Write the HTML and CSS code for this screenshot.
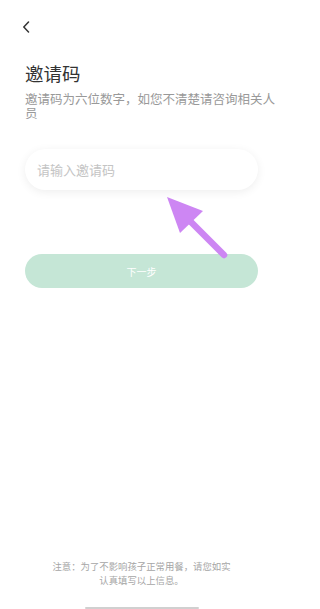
FILE: index.html
```html
<!DOCTYPE html>
<html lang="zh">
<head>
<meta charset="utf-8">
<link rel="stylesheet" href="styles.css">
</head>
<body>
<div class="page">
  <div class="nav">
    <svg class="back" width="8" height="12" viewBox="0 0 8 12"><path d="M6.5 1 L1.8 6 L6.5 11" fill="none" stroke="#333" stroke-width="1.5" stroke-linecap="round" stroke-linejoin="round"/></svg>
  </div>
  <h1 class="title">邀请码</h1>
  <p class="subtitle">邀请码为六位数字，如您不清楚请咨询相关人员</p>
  <div class="input-box"><span class="placeholder">请输入邀请码</span></div>
  <div class="btn">下一步</div>
  <div class="footer">
    <p class="note">注意：为了不影响孩子正常用餐，请您如实认真填写以上信息。</p>
    <div class="home-bar"></div>
  </div>
  <svg class="arrow" width="284" height="609" viewBox="0 0 284 609">
    <line x1="191" y1="222" x2="224" y2="255" stroke="#cd86f3" stroke-width="6.5" stroke-linecap="round"/>
    <polygon points="167,197 203,211 180,233" fill="#cd86f3"/>
  </svg>
</div>
</body>
</html>
```
FILE: styles.css
```css
html, body {
  margin: 0;
  padding: 0;
  background: #ffffff;
}
.page {
  position: relative;
  width: 284px;
  height: 609px;
  box-sizing: border-box;
  padding: 0 26px 0 25px;
  display: flex;
  flex-direction: column;
  font-family: "Noto Sans CJK SC", "Noto Sans", sans-serif;
  overflow: hidden;
}
.nav {
  height: 53px;
  display: flex;
  align-items: center;
}
.back {
  margin-left: -3px;
}
.title {
  margin: 8px 0 0;
  font-size: 18.5px;
  line-height: 24px;
  font-weight: 400;
  color: #333333;
}
.subtitle {
  margin: 7px -22px 0 0;
  font-size: 12.5px;
  line-height: 13.5px;
  color: #999999;
}
.input-box {
  margin-top: 30px;
  height: 41px;
  border-radius: 21px;
  background: #ffffff;
  box-shadow: 0 2px 10px rgba(0, 0, 0, 0.07);
  display: flex;
  align-items: center;
  padding-left: 12px;
}
.placeholder {
  font-size: 13px;
  color: #c4c4c4;
}
.btn {
  margin-top: 64px;
  height: 34px;
  border-radius: 17px;
  background: #c5e6d6;
  color: #ffffff;
  font-size: 10px;
  display: flex;
  align-items: center;
  justify-content: center;
}
.footer {
  margin-top: auto;
  display: flex;
  flex-direction: column;
  align-items: center;
}
.note {
  margin: 0 0 20px;
  width: 182px;
  text-align: center;
  font-size: 9.4px;
  line-height: 14px;
  color: #a6a6a6;
}
.home-bar {
  width: 114px;
  height: 2px;
  background: #d0d0d0;
  border-radius: 1px;
}
.arrow {
  position: absolute;
  left: 0;
  top: 0;
  pointer-events: none;
}
```
